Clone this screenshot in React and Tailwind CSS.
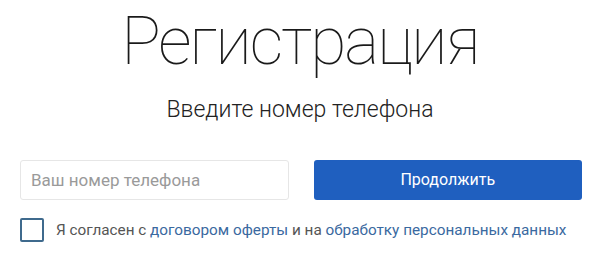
export default function App() {
  return (
    <div className="w-[600px] h-[259px] bg-white font-['Roboto',sans-serif] overflow-hidden">
      <h1 className="text-center text-[66px] leading-none font-thin tracking-[-2px] text-[#1a1a1a] pt-[9px]">
        Регистрация
      </h1>
      <p className="text-center text-[23px] leading-none font-light text-[#222] mt-[23px]">
        Введите номер телефона
      </p>
      <div className="ml-5 w-[562px] grid grid-cols-2 gap-[25px] mt-[39px]">
        <input
          type="tel"
          placeholder="Ваш номер телефона"
          className="h-[40px] rounded-[3px] border border-[#e6e6e6] px-[10px] text-[17px] text-[#333] placeholder:text-[#9a9a9a] outline-none"
        />
        <button className="h-[40px] rounded-[3px] bg-[#1f5fbf] text-white text-[16px]">
          Продолжить
        </button>
      </div>
      <label className="flex items-center ml-5 mt-[18px] gap-3">
        <span className="w-6 h-6 rounded-[2px] border-2 border-[#3f6a8d] shrink-0" />
        <span className="text-[15.3px] text-[#555]">
          Я согласен с <a className="text-[#3a69a0]">договором оферты</a> и на{" "}
          <a className="text-[#3a69a0]">обработку персональных данных</a>
        </span>
      </label>
    </div>
  );
}
